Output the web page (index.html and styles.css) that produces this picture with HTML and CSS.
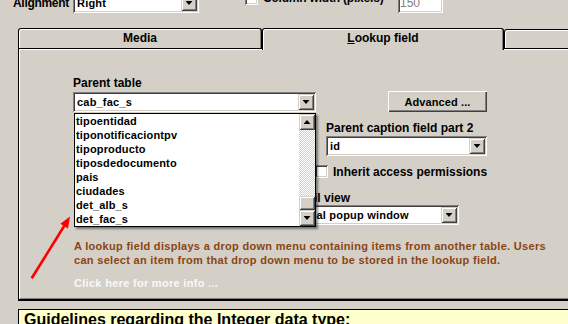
FILE: index.html
```html
<!DOCTYPE html>
<html lang="en">
<head>
  <meta charset="UTF-8">
  <meta name="viewport" content="width=device-width, initial-scale=1.0">
  <title>Lookup field</title>
  <link rel="stylesheet" href="styles.css">
</head>
<body>

  <div class="top-row">
    <span class="top-label">Alignment</span>
    <div class="combo combo-align">
      <span class="combo-text">Right</span>
      <span class="drop-btn"></span>
    </div>
    <span class="check"></span>
    <span class="check-label">Column width (pixels)</span>
    <div class="textbox">150</div>
  </div>

  <div class="tabs">
    <div class="tab tab-media">Media</div>
    <div class="tab tab-lookup"><u>L</u>ookup field</div>
    <div class="tab tab-rest"></div>
  </div>

  <div class="panel">
    <div class="fields">
      <label class="field-label">Parent table</label>
      <span></span>

      <div class="combo-wrap">
        <div class="combo">
          <span class="combo-text">cab_fac_s</span>
          <span class="drop-btn"></span>
        </div>
        <div class="droplist">
          <ul class="items">
            <li>tipoentidad</li>
            <li>tiponotificaciontpv</li>
            <li>tipoproducto</li>
            <li>tiposdedocumento</li>
            <li>pais</li>
            <li>ciudades</li>
            <li>det_alb_s</li>
            <li>det_fac_s</li>
          </ul>
          <div class="scrollbar">
            <span class="scroll-btn up"></span>
            <span class="track"><span class="thumb"></span></span>
            <span class="scroll-btn down"></span>
          </div>
        </div>
      </div>
      <button class="btn">Advanced ...</button>

      <span></span>
      <label class="field-label">Parent caption field part 2</label>

      <span></span>
      <div class="combo">
        <span class="combo-text">id</span>
        <span class="drop-btn"></span>
      </div>

      <div class="check-row">
        <span class="check"></span>
        <span>Inherit access permissions</span>
      </div>

      <div class="view-field">
        <label class="field-label">Detail view</label>
        <div class="combo">
          <span class="combo-text">Normal popup window</span>
          <span class="drop-btn"></span>
        </div>
      </div>
    </div>

    <p class="desc">A lookup field displays a drop down menu containing items from another table. Users<br>can select an item from that drop down menu to be stored in the lookup field.</p>
    <a class="more">Click here for more info ...</a>
  </div>

  <div class="guidelines">Guidelines regarding the Integer data type:</div>

  <svg class="arrow" width="568" height="324" viewBox="0 0 568 324">
    <line x1="31.7" y1="278.3" x2="64.5" y2="225.5" stroke="#f00" stroke-width="2.6"/>
    <polygon points="70,216.5 68,228.4 60.4,223.7" fill="#f00"/>
  </svg>

</body>
</html>
```

FILE: styles.css
```css
* {
  box-sizing: border-box;
}

html,
body {
  overflow: hidden;
}

body {
  margin: 0;
  width: 568px;
  height: 324px;
  background: #d4d0c8;
  font-family: "Liberation Sans", Arial, sans-serif;
  font-size: 12px;
  font-weight: bold;
  color: #000;
}

/* top row, partly scrolled away */
.top-row {
  display: flex;
  align-items: flex-start;
  height: 23px;
  margin-top: -10px;
  padding-left: 13px;
}

.top-label {
  width: 60px;
  margin-top: 3px;
  line-height: 20px;
  letter-spacing: -0.3px;
}

.combo-align {
  width: 126px;
  margin-top: 3px;
}

.top-row .check {
  margin: 2px 0 0 46px;
}

.check-label {
  width: 135px;
  margin: 2px 0 0 5px;
  line-height: 13px;
  letter-spacing: -0.2px;
}

.textbox {
  width: 45px;
  height: 20px;
  margin-top: 3px;
  padding: 3px 0 0 2px;
  background: #fff;
  box-shadow: inset 1px 1px #808080, inset -1px -1px #fff, inset 2px 2px #404040, inset -2px -2px #d4d0c8;
  color: #808080;
  font-weight: normal;
  line-height: 14px;
}

/* win classic widgets */
.combo {
  display: flex;
  height: 20px;
  padding: 2px;
  background: #fff;
  box-shadow: inset 1px 1px #808080, inset -1px -1px #fff, inset 2px 2px #404040, inset -2px -2px #d4d0c8;
  font-size: 11px;
}

.combo-text {
  flex: 1;
  padding-left: 2px;
  line-height: 16px;
  letter-spacing: 0.2px;
  white-space: nowrap;
  overflow: hidden;
}

.drop-btn,
.scroll-btn {
  display: flex;
  justify-content: center;
  align-items: center;
  width: 16px;
  height: 16px;
  background: #d4d0c8;
  box-shadow: inset 1px 1px #d4d0c8, inset -1px -1px #404040, inset 2px 2px #fff, inset -2px -2px #808080;
}

.drop-btn::before,
.scroll-btn::before {
  content: "";
  width: 7px;
  height: 4px;
  background: #000;
  clip-path: polygon(0 0, 100% 0, 50% 100%);
}

.scroll-btn.up::before {
  clip-path: polygon(50% 0, 100% 100%, 0 100%);
}

.check {
  width: 13px;
  height: 13px;
  flex: none;
  background: #fff;
  box-shadow: inset 1px 1px #808080, inset -1px -1px #fff, inset 2px 2px #404040, inset -2px -2px #d4d0c8;
}

.btn {
  width: 99px;
  height: 21px;
  padding: 0;
  border: none;
  background: #d4d0c8;
  box-shadow: inset 1px 1px #fff, inset -1px -1px #404040, inset -2px -2px #808080;
  font: inherit;
  font-size: 11px;
  letter-spacing: 0.1px;
  color: #000;
}

/* tabs */
.tabs {
  display: flex;
  align-items: flex-end;
  height: 20px;
  margin: 15px 0 0 18px;
}

.tab {
  flex: none;
  height: 20px;
  border: 1px solid #000;
  border-bottom: none;
  border-radius: 3px 3px 0 0;
  box-shadow: inset 1px 1px #fff, inset -1px 0 #808080;
  text-align: center;
  line-height: 18px;
}

.tab-media {
  width: 244px;
}

.tab-lookup {
  position: relative;
  z-index: 1;
  width: 242px;
  height: 22px;
  margin-bottom: -2px;
  background: #d4d0c8;
}

.tab-rest {
  width: 80px;
  height: 19px;
}

/* panel */
.panel {
  width: 570px;
  height: 253px;
  margin-left: 18px;
  padding: 27px 0 0 54px;
  border: 1px solid #000;
  border-bottom-width: 2px;
  border-right: none;
  box-shadow: inset 1px 1px #fff, inset 0 -1px #808080;
}

.fields {
  display: grid;
  grid-template-columns: 243px 161px;
  column-gap: 10px;
}

.field-label {
  line-height: 14px;
  white-space: nowrap;
}

.combo-wrap {
  position: relative;
  z-index: 2;
  margin-top: 2px;
}

.fields .btn {
  justify-self: end;
  margin-top: 1px;
}

.fields > .field-label:nth-of-type(2) {
  margin-top: 9px;
}

.fields > .combo {
  margin-top: 1px;
}

.check-row {
  grid-column: 2;
  display: flex;
  align-items: center;
  gap: 5px;
  height: 13px;
  margin: 9px 0 0 -11px;
  white-space: nowrap;
}

.view-field {
  grid-column: 1 / 3;
  justify-self: end;
  width: 176px;
  margin: 13px 28px 0 0;
}

.view-field .field-label {
  display: block;
  padding-left: 5px;
}

/* open dropdown */
.droplist {
  position: absolute;
  top: 21px;
  left: 1px;
  display: flex;
  width: 242px;
  height: 114px;
  border: 1px solid #000;
  background: #fff;
  box-shadow: 2px 2px 2px rgba(0, 0, 0, 0.45);
  font-size: 11px;
}

.items {
  flex: 1;
  margin: 0;
  padding: 0 0 0 1px;
  list-style: none;
}

.items li {
  line-height: 14px;
  letter-spacing: 0.15px;
}

.scrollbar {
  display: flex;
  flex-direction: column;
  width: 16px;
  background-image: repeating-conic-gradient(#fff 0 25%, #d4d0c8 0 50%);
  background-size: 2px 2px;
}

.track {
  flex: 1;
  display: flex;
  align-items: flex-end;
}

.thumb {
  width: 16px;
  height: 14px;
  background: #d4d0c8;
  box-shadow: inset 1px 1px #d4d0c8, inset -1px -1px #404040, inset 2px 2px #fff, inset -2px -2px #808080;
}

/* help text */
.desc {
  margin: 14px 0 0 1px;
  font-size: 11px;
  line-height: 14px;
  letter-spacing: 0.3px;
  color: #8b4513;
  white-space: nowrap;
}

.more {
  display: block;
  margin: 9px 0 0 1px;
  font-size: 11px;
  line-height: 14px;
  letter-spacing: 0.3px;
  color: #f8f8f8;
  cursor: pointer;
}

.guidelines {
  width: 560px;
  margin: 8px 0 0 18px;
  padding: 0 5px;
  border: 1px solid #000;
  background: #ffffcc;
  font-size: 16px;
  line-height: 20px;
}

.arrow {
  position: absolute;
  top: 0;
  left: 0;
  pointer-events: none;
}
```
